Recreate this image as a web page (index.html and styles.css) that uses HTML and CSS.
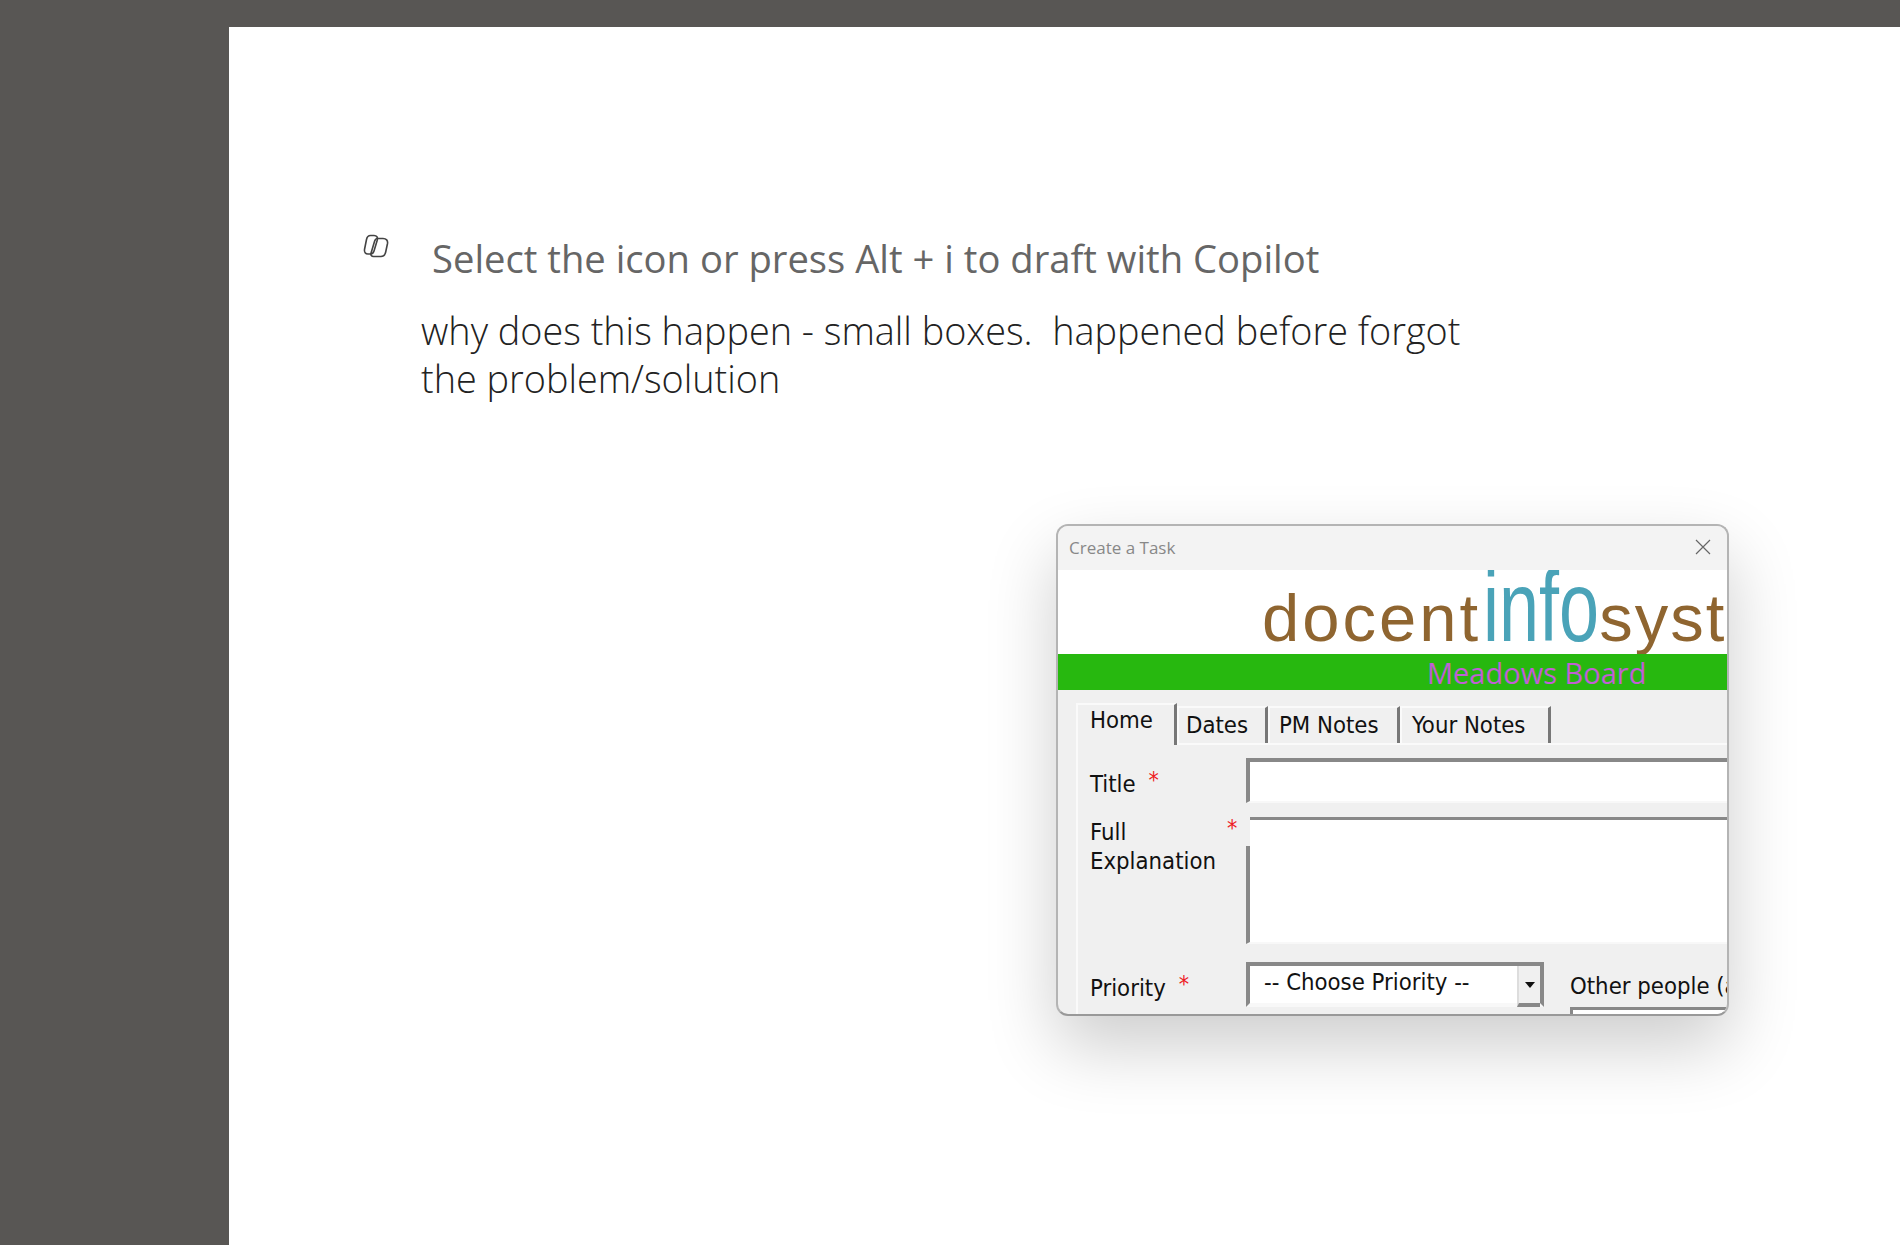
FILE: index.html
```html
<!DOCTYPE html>
<html lang="en">
  <head>
    <meta charset="UTF-8" />
    <title>Document</title>
    <link rel="stylesheet" href="styles.css">
  </head>
  <body>
    <main class="paper">
      <div class="prompt">
        <svg class="copilot" viewBox="0 0 26 24" fill="none" stroke="#444" stroke-width="1.6" stroke-linejoin="round">
          <path d="M7.500 1.500h3.500c2.800 0 4 2 3.300 4.500L11 17c-.6 2-1.800 3-3.500 3H5C2.500 20 1 18 1.500 15.500L3.500 5.500C4 3 5.500 1.500 7.500 1.500z" />
          <path d="M14.500 4.500h5.500c3.300 0 5 2 4.500 5l-1.800 8.500c-.6 2.800-2.300 4.500-4.700 4.500H10.500c-2 0-3-1.500-2.500-3.300L11.500 7.500c.5-1.800 1.500-3 3-3z" />
        </svg>
        <span class="prompt-text">Select the icon or press Alt + i to draft with Copilot</span>
      </div>
      <p class="note">why does this happen - small boxes.&nbsp; happened before forgot the problem/solution</p>

      <section class="window">
        <header class="titlebar">
          <span>Create a Task</span>
          <svg class="close" viewBox="0 0 16 16" stroke="#666" stroke-width="1.2"><path d="M1 1l14 14M15 1L1 15" /></svg>
        </header>
        <div class="logo">
          <span class="brown">docent</span><span class="info">info</span><span class="brown brown-tail">syst</span>
        </div>
        <div class="greenbar"><span>Meadows Board</span></div>
        <div class="body">
          <nav class="tabs">
            <span class="tab tab-home">Home</span>
            <span class="tab tab-dates">Dates</span>
            <span class="tab tab-pm">PM Notes</span>
            <span class="tab tab-your">Your Notes</span>
          </nav>
          <div class="panel">
            <div class="row row-title">
              <label>Title<b class="req">*</b></label>
              <div class="box box-title"></div>
            </div>
            <div class="row row-full">
              <label>Full<br>Explanation<b class="req req-full">*</b></label>
              <div class="box box-full"></div>
            </div>
            <div class="row row-priority">
              <label>Priority<b class="req">*</b></label>
              <div class="box box-select">
                <span class="select-text">-- Choose Priority --</span>
                <span class="select-btn"><i></i></span>
              </div>
              <div class="other">
                <label>Other people (as</label>
                <div class="box box-other"></div>
              </div>
            </div>
          </div>
        </div>
      </section>
    </main>
  </body>
</html>
```

FILE: styles.css
```css
* {
  box-sizing: border-box;
}

html,
body {
  margin: 0;
  height: 1245px;
  overflow: hidden;
}

body {
  background: #585654;
  padding: 27px 0 0 229px;
  font-family: "Open Sans", sans-serif;
}

.paper {
  background: #fff;
  height: 1218px;
  padding: 207px 0 0 134px;
}

.prompt {
  display: flex;
  align-items: flex-start;
  height: 45px;
}

.copilot {
  width: 26px;
  height: 24px;
  margin-right: 43px;
}

.prompt-text {
  color: #666;
  font-size: 38.200px;
  line-height: 48px;
  white-space: nowrap;
}

.note {
  margin: 28px 0 0 58px;
  width: 1080px;
  color: #222;
  font-size: 37.800px;
  font-weight: 300;
  line-height: 48px;
}

.window {
  width: 673px;
  height: 492px;
  margin: 121px 0 0 693px;
  background: #f0f0f0;
  border: 2px solid #b4b4b4;
  border-bottom-color: #999;
  border-radius: 12px;
  overflow: hidden;
  box-shadow: 0 30px 70px rgba(0, 0, 0, 0.2);
}

.titlebar {
  height: 44px;
  padding: 0 16px 2px 11px;
  background: #f3f3f3;
  color: #888;
  font-size: 17px;
  display: flex;
  align-items: center;
  justify-content: space-between;
}

.close {
  width: 16px;
  height: 16px;
}

.logo {
  height: 84px;
  background: #fff;
  padding-left: 204px;
  padding-top: 6px;
  font-family: "Liberation Sans", sans-serif;
  white-space: nowrap;
  overflow: hidden;
  line-height: 84px;
}

.brown {
  color: #8f6530;
  font-size: 67px;
  letter-spacing: 3px;
}

.brown-tail {
  letter-spacing: 2px;
}

.info {
  display: inline-block;
  width: 116px;
  margin-left: 2px;
  color: #4aa3b8;
  font-size: 100px;
  line-height: 60px;
  transform: scaleX(0.72);
  transform-origin: left bottom;
}

.greenbar {
  height: 36px;
  background: #27b80f;
  padding-left: 369px;
  color: #c060d4;
  font-size: 29px;
  line-height: 38px;
  overflow: hidden;
  white-space: nowrap;
}

.body {
  padding: 13px 0 0 18px;
  color: #111;
  font-size: 23.700px;
  font-family: "DejaVu Sans", sans-serif;
  font-stretch: condensed;
}

.tabs {
  display: flex;
  align-items: flex-end;
  height: 42px;
  border-bottom: 2px solid #fafafa;
}

.tab {
  height: 37px;
  padding: 0 0 0 7px;
  border-top: 2px solid #fafafa;
  border-left: 2px solid #fafafa;
  border-right: 3px solid #777;
  line-height: 34px;
}

.tab-home {
  width: 101px;
  height: 42px;
  padding-left: 12px;
  line-height: 30px;
  margin-bottom: -2px;
  background: #f0f0f0;
}

.tab-dates {
  width: 91px;
}

.tab-pm {
  width: 132px;
  padding-left: 9px;
}

.tab-your {
  width: 151px;
  padding-left: 10px;
}

.panel {
  border-left: 2px solid #fafafa;
  padding-left: 12px;
}

.row {
  display: flex;
  align-items: flex-start;
  white-space: nowrap;
}

.row label {
  position: relative;
  display: block;
  width: 156px;
  flex: none;
  line-height: 29px;
}

.req {
  color: #ee1c25;
  font-size: 23px;
  font-weight: 400;
  margin-left: 13px;
  vertical-align: 4px;
}

.req-full {
  position: absolute;
  left: 137px;
  top: -3px;
  margin: 0;
}

.box {
  position: relative;
  background: #fff;
  flex: none;
  width: 500px;
  border-top: 4px solid #888;
  border-left: 4px solid #888;
  border-bottom: 2px solid #f8f8f8;
}

.row-title {
  padding-top: 13px;
}

.row-title label {
  padding-top: 8px;
}

.box-title {
  height: 45px;
}

.row-full {
  padding-top: 14px;
}

.row-full label {
  padding-top: 1px;
}

.box-full {
  height: 127px;
  border-top-width: 3px;
}

.box-full::before {
  content: "";
  position: absolute;
  left: -4px;
  top: -3px;
  width: 4px;
  height: 29px;
  background: #f0f0f0;
}

.row-priority {
  padding-top: 18px;
}

.row-priority label {
  padding-top: 8px;
}

.box-select {
  width: 298px;
  height: 45px;
  border-right: 4px solid #888;
  border-bottom-width: 4px;
  padding-left: 14px;
  line-height: 32px;
}

.select-btn {
  position: absolute;
  right: 0;
  top: 0;
  width: 23px;
  height: 41px;
  background: #f0f0f0;
  border-left: 2px solid #ddd;
  border-bottom: 4px solid #888;
  display: flex;
  align-items: center;
  justify-content: center;
}

.select-btn i {
  border: 5px solid transparent;
  border-top: 6px solid #111;
  border-bottom: 0;
}

.other {
  margin-left: 26px;
}

.other label {
  width: 200px;
  padding-top: 10px;
}

.box-other {
  height: 20px;
  margin-top: 6px;
  border-top-width: 3px;
  border-left-width: 3px;
}
```
